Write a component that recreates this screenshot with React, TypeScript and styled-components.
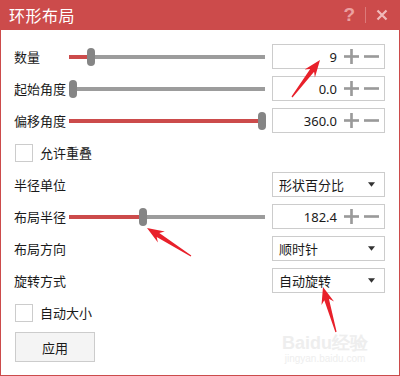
import React from "react";
import styled, { createGlobalStyle } from "styled-components";

const GlobalStyle = createGlobalStyle`
  html, body {
    margin: 0;
    padding: 0;
    background: #ffffff;
  }
  body {
    font-family: "Noto Sans CJK SC", "Noto Sans", sans-serif;
  }
`;

const RED = "#cc4b4b";

type SliderRow = { label: string; pos: number; value: string };

const sliders1: SliderRow[] = [
  { label: "数量", pos: 0.095, value: "9" },
  { label: "起始角度", pos: 0, value: "0.0" },
  { label: "偏移角度", pos: 1, value: "360.0" },
];

// builds a tapered annotation arrow from tail to tip
const arrowPath = (tx: number, ty: number, px: number, py: number) => {
  const dx = px - tx;
  const dy = py - ty;
  const len = Math.sqrt(dx * dx + dy * dy);
  const ux = dx / len;
  const uy = dy / len;
  const nx = -uy;
  const ny = ux;
  const headLen = 17;
  const headW = 6.5;
  const bx = px - ux * headLen;
  const by = py - uy * headLen;
  const sx = px - ux * (headLen - 4);
  const sy = py - uy * (headLen - 4);
  const pts = [
    [tx + nx * 0.6, ty + ny * 0.6],
    [sx + nx * 2.4, sy + ny * 2.4],
    [bx + nx * headW, by + ny * headW],
    [px, py],
    [bx - nx * headW, by - ny * headW],
    [sx - nx * 2.4, sy - ny * 2.4],
    [tx - nx * 0.6, ty - ny * 0.6],
  ];
  return "M" + pts.map((p) => p[0].toFixed(1) + " " + p[1].toFixed(1)).join(" L") + " Z";
};

const App = () => {
  return (
    <>
      <GlobalStyle />
      <Window>
        <TitleBar>
          <Title>环形布局</Title>
          <TitleTools>
            <Help>?</Help>
            <Divider />
            <CloseIcon viewBox="0 0 12 12">
              <path d="M1.5 1.5 L10.5 10.5 M10.5 1.5 L1.5 10.5" />
            </CloseIcon>
          </TitleTools>
        </TitleBar>
        <Content>
          {sliders1.map((s) => (
            <Row key={s.label}>
              <Label>{s.label}</Label>
              <Slider pos={s.pos} />
              <NumberBox value={s.value} />
            </Row>
          ))}
          <Row>
            <CheckItem label="允许重叠" />
          </Row>
          <Row>
            <Label>半径单位</Label>
            <Spacer />
            <Select value="形状百分比" />
          </Row>
          <Row>
            <Label>布局半径</Label>
            <Slider pos={0.37} />
            <NumberBox value="182.4" />
          </Row>
          <Row>
            <Label>布局方向</Label>
            <Spacer />
            <Select value="顺时针" />
          </Row>
          <Row>
            <Label>旋转方式</Label>
            <Spacer />
            <Select value="自动旋转" />
          </Row>
          <Row>
            <CheckItem label="自动大小" />
          </Row>
          <ApplyButton>应用</ApplyButton>
        </Content>
        <Watermark>
          <WmBig>Baidu经验</WmBig>
          <WmSmall>jingyan.baidu.com</WmSmall>
        </Watermark>
        <Arrows width="400" height="376" viewBox="0 0 400 376">
          <Arrow d={arrowPath(292, 97, 320, 60)} />
          <Arrow d={arrowPath(191, 256, 147, 228)} />
          <Arrow d={arrowPath(336, 332, 323, 287)} />
        </Arrows>
      </Window>
    </>
  );
};

const Slider = ({ pos }: { pos: number }) => (
  <Track>
    <Fill $pos={pos} />
    <Thumb $pos={pos} />
  </Track>
);

const NumberBox = ({ value }: { value: string }) => (
  <Box>
    <NumValue>{value}</NumValue>
    <StepIcon viewBox="0 0 16 16">
      <rect x="0" y="6.6" width="16" height="2.8" />
      <rect x="6.6" y="0" width="2.8" height="16" />
    </StepIcon>
    <StepIcon viewBox="0 0 16 16">
      <rect x="0" y="6.6" width="16" height="2.8" />
    </StepIcon>
  </Box>
);

const Select = ({ value }: { value: string }) => (
  <Box>
    <SelectValue>{value}</SelectValue>
    <Caret viewBox="0 0 8 5">
      <path d="M0 0 L8 0 L4 5 Z" />
    </Caret>
  </Box>
);

const CheckItem = ({ label }: { label: string }) => (
  <Check>
    <CheckBox />
    <span>{label}</span>
  </Check>
);

export default App;

const Window = styled.div`
  position: relative;
  width: 400px;
  height: 376px;
  box-sizing: border-box;
  border: 1px solid ${RED};
  border-top: none;
  background: #ffffff;
  overflow: hidden;
`;

const TitleBar = styled.div`
  display: flex;
  align-items: center;
  justify-content: space-between;
  height: 30px;
  margin: 0 -1px;
  padding: 0 12px 0 9px;
  background: ${RED};
  color: #ffffff;
`;

const Title = styled.div`
  font-size: 16px;
  letter-spacing: 0.5px;
`;

const TitleTools = styled.div`
  display: flex;
  align-items: center;
  gap: 10px;
`;

const Help = styled.span`
  font-family: "Liberation Sans", Arial, sans-serif;
  font-weight: bold;
  font-size: 19px;
  color: #eba0a0;
`;

const Divider = styled.span`
  width: 1px;
  height: 16px;
  background: #dc7a7a;
`;

const CloseIcon = styled.svg`
  width: 12px;
  height: 12px;
  stroke: #f0baba;
  stroke-width: 2.2;
  fill: none;
`;

const Content = styled.div`
  display: flex;
  flex-direction: column;
  gap: 7px;
  padding: 14px 14px 0 13px;
`;

const Row = styled.div`
  display: flex;
  align-items: center;
  height: 25px;
`;

const Label = styled.div`
  width: 55px;
  flex-shrink: 0;
  font-size: 13px;
  color: #1a1a1a;
  white-space: nowrap;
`;

const Spacer = styled.div`
  flex: 1;
`;

const Track = styled.div`
  position: relative;
  width: 197px;
  height: 4px;
  margin-right: 7px;
  background: #9c9c9c;
`;

const Fill = styled.div<{ $pos: number }>`
  position: absolute;
  left: 0;
  top: 0;
  height: 4px;
  width: ${({ $pos }) => $pos * 189 + 2}px;
  background: ${RED};
`;

const Thumb = styled.div<{ $pos: number }>`
  position: absolute;
  top: -7px;
  left: ${({ $pos }) => $pos * 189}px;
  width: 8px;
  height: 18px;
  border-radius: 4px;
  background: #858585;
`;

const Box = styled.div`
  display: flex;
  align-items: center;
  box-sizing: border-box;
  width: 113px;
  height: 25px;
  margin-left: auto;
  border: 1px solid #cccccc;
  background: #ffffff;
`;

const NumValue = styled.span`
  flex: 1;
  text-align: right;
  padding-right: 7px;
  font-family: "Noto Sans", "Liberation Sans", sans-serif;
  font-size: 13px;
  color: #1a1a1a;
`;

const StepIcon = styled.svg`
  width: 15px;
  height: 15px;
  margin-right: 5px;
  fill: #9a9a9a;
`;

const SelectValue = styled.span`
  flex: 1;
  padding-left: 6px;
  font-size: 13px;
  color: #1a1a1a;
`;

const Caret = styled.svg`
  width: 7px;
  height: 5px;
  margin-right: 9px;
  fill: #333333;
`;

const Check = styled.label`
  display: flex;
  align-items: center;
  gap: 7px;
  font-size: 13px;
  color: #1a1a1a;
`;

const CheckBox = styled.span`
  box-sizing: border-box;
  width: 18px;
  height: 18px;
  margin-left: 1px;
  border: 1px solid #cccccc;
  background: #ffffff;
`;

const ApplyButton = styled.button`
  width: 80px;
  height: 30px;
  margin-left: 1px;
  border: 1px solid #cccccc;
  background: #f4f4f4;
  font-family: "Noto Sans CJK SC", sans-serif;
  font-size: 13px;
  color: #1a1a1a;
`;

const Watermark = styled.div`
  position: absolute;
  left: 281px;
  top: 334px;
  display: flex;
  flex-direction: column;
  align-items: center;
  color: #eeeeee;
  pointer-events: none;
`;

const WmBig = styled.div`
  font-family: "Liberation Sans", sans-serif;
  font-weight: bold;
  font-size: 18px;
  line-height: 19px;
`;

const WmSmall = styled.div`
  font-family: "Liberation Sans", sans-serif;
  font-size: 10px;
  line-height: 12px;
`;

const Arrows = styled.svg`
  position: absolute;
  left: -1px;
  top: 0;
  pointer-events: none;
`;

const Arrow = styled.path`
  fill: #e8202a;
`;
